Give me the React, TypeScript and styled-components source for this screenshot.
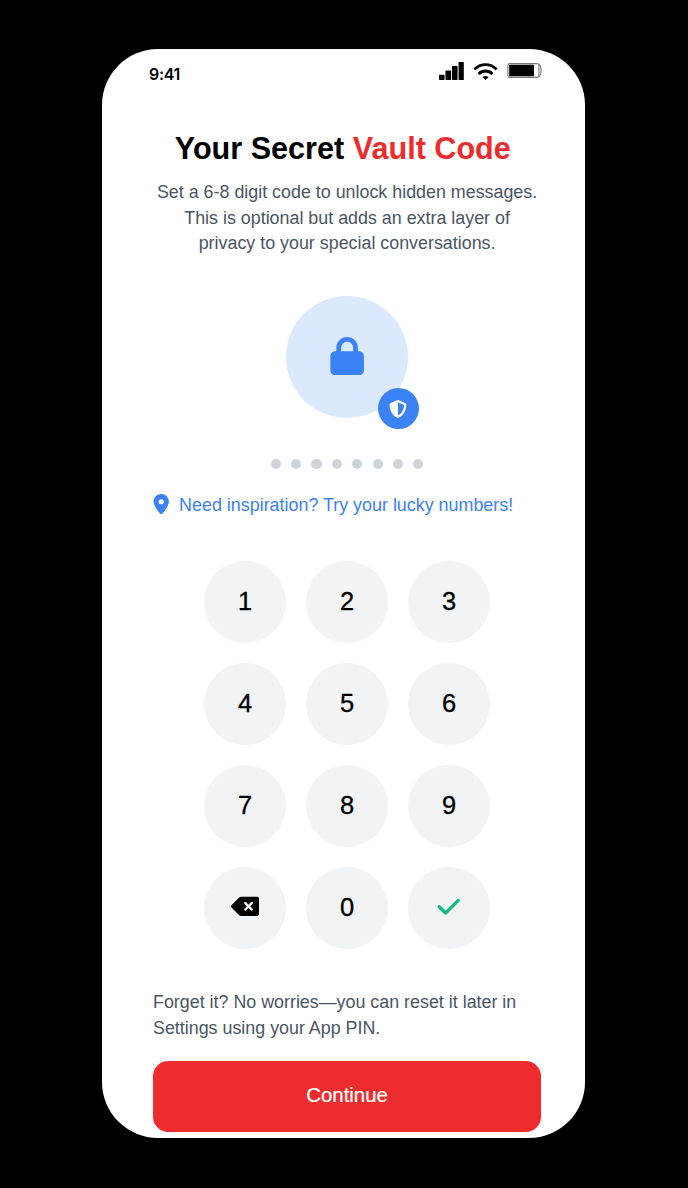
import React from "react";
import styled, { createGlobalStyle } from "styled-components";
import {
  FaLock,
  FaShieldHalved,
  FaLocationDot,
  FaDeleteLeft,
  FaCheck,
} from "react-icons/fa6";

const GlobalStyle = createGlobalStyle`
  * { box-sizing: border-box; }
  body {
    margin: 0;
    background: #000;
    font-family: "Liberation Sans", Arial, sans-serif;
  }
  svg { display: block; flex: none; }
  button { font-family: inherit; border: 0; padding: 0; cursor: pointer; }
`;

const Stage = styled.div`
  height: 1188px;
  padding: 49px 0 0 101.7px;
  background: #000;
`;

const Phone = styled.main`
  display: flex;
  flex-direction: column;
  width: 483.7px;
  height: 1089px;
  padding: 0 44.2px 0 51.3px;
  border-radius: 56px;
  background: #fff;
  overflow: hidden;
`;

const StatusBar = styled.header`
  display: flex;
  justify-content: space-between;
  height: 51px;
  padding-top: 13px;
  margin: 0 -0.8px 0 -4px;
`;

const Clock = styled.time`
  padding-top: 2px;
  font: 600 16px/20px Inter, sans-serif;
  letter-spacing: -0.3px;
`;

const Indicators = styled.div`
  display: flex;
  gap: 9px;
`;

const Title = styled.h1`
  margin: 28px 0 0;
  padding-right: 8.6px;
  font-size: 30.6px;
  line-height: 41px;
  font-weight: 700;
  text-align: center;
  white-space: nowrap;
`;

const Accent = styled.span`
  color: #ee2c2e;
`;

const Copy = styled.p<{ $centered?: boolean }>`
  margin: 0;
  font-size: 17.86px;
  line-height: 25.6px;
  color: #4b5563;
  text-align: ${(p) => (p.$centered ? "center" : "left")};
  white-space: nowrap;
`;

const Intro = styled.section`
  margin-top: 11px;
`;

const Emblem = styled.div`
  position: relative;
  display: flex;
  align-items: center;
  justify-content: center;
  align-self: center;
  flex: none;
  width: 122.5px;
  height: 122.5px;
  margin-top: 39px;
  padding-bottom: 2px;
  border-radius: 50%;
  background: #dbe9fe;
  color: #3b82f6;
`;

const Badge = styled.span`
  position: absolute;
  right: -10.6px;
  bottom: -10.8px;
  display: flex;
  align-items: center;
  justify-content: center;
  width: 41px;
  height: 41px;
  border-radius: 50%;
  background: #3b82f6;
  color: #fff;
`;

const Dots = styled.div`
  display: flex;
  justify-content: center;
  gap: 10.2px;
  margin-top: 40.5px;
`;

const Dot = styled.i`
  width: 10.2px;
  height: 10.2px;
  border-radius: 50%;
  background: #d1d3dc;
`;

const Hint = styled.a`
  display: flex;
  align-items: center;
  gap: 8px;
  height: 26px;
  margin: 23.5px 0 0 -2.4px;
  font-size: 17.9px;
  color: #3b82f6;
  white-space: nowrap;

  svg { margin-top: -3px; }
`;

const Keypad = styled.div`
  display: grid;
  grid-template-columns: repeat(3, 82px);
  gap: 20px;
  justify-content: center;
  margin-top: 42.3px;
`;

const Key = styled.button<{ $color?: string }>`
  display: flex;
  align-items: center;
  justify-content: center;
  height: 82px;
  padding-bottom: 2px;
  border-radius: 50%;
  background: #f2f3f5;
  color: ${(p) => p.$color ?? "#000"};
  font-size: 25.5px;
  line-height: 36px;
  -webkit-text-stroke: 0.3px currentColor;
`;

const Note = styled.section`
  margin-top: 41.6px;
`;

const Continue = styled.button`
  flex: none;
  height: 71.5px;
  margin-top: 19px;
  padding-bottom: 1px;
  border-radius: 15.3px;
  background: #ee2c2e;
  color: #fff;
  font-size: 20.4px;
  -webkit-text-stroke: 0.2px currentColor;
`;

const Signal = () => (
  <svg width="25" height="18" viewBox="0 0 25 18">
    <rect x="0" y="12.8" width="5.6" height="5.2" rx="0.8" />
    <rect x="6.5" y="8.5" width="5.6" height="9.5" rx="0.8" />
    <rect x="13" y="4" width="5.6" height="14" rx="0.8" />
    <rect x="19.6" y="0" width="5.2" height="18" rx="0.6" />
  </svg>
);

const Wifi = () => (
  <svg width="25" height="18" viewBox="0 0 25 18" fill="none" stroke="#000" strokeWidth="2.8">
    <path d="M1.4 7.4C7.6 0.9 17.4 0.9 23.6 7.4" />
    <path d="M5.6 11.9C9.5 8 15.5 8 19.4 11.9" />
    <path d="M9.4 15.2C11.1 13.6 13.9 13.6 15.6 15.2L12.5 18Z" fill="#000" stroke="none" />
  </svg>
);

const Battery = () => (
  <svg width="35" height="18" viewBox="0 0 35 18" fill="none">
    <rect x="0.9" y="1.6" width="31" height="13.8" rx="1.8" stroke="#777" strokeWidth="1.1" />
    <path d="M32.4 2.2Q34.2 5 34.2 8.5T32.4 14.8" stroke="#777" strokeWidth="1.1" />
    <rect x="2.2" y="2.7" width="24.8" height="11.6" rx="0.6" fill="#000" />
  </svg>
);

const DIGITS = ["1", "2", "3", "4", "5", "6", "7", "8", "9"];

export default function App() {
  return (
    <Stage>
      <GlobalStyle />
      <Phone>
        <StatusBar>
          <Clock>9:41</Clock>
          <Indicators>
            <Signal />
            <Wifi />
            <Battery />
          </Indicators>
        </StatusBar>
        <Title>
          Your Secret <Accent>Vault Code</Accent>
        </Title>
        <Intro>
          <Copy $centered>Set a 6-8 digit code to unlock hidden messages.</Copy>
          <Copy $centered>This is optional but adds an extra layer of</Copy>
          <Copy $centered>privacy to your special conversations.</Copy>
        </Intro>
        <Emblem>
          <FaLock size={38.3} />
          <Badge>
            <FaShieldHalved size={17.9} />
          </Badge>
        </Emblem>
        <Dots>
          {Array.from({ length: 8 }, (_, i) => (
            <Dot key={i} />
          ))}
        </Dots>
        <Hint>
          <FaLocationDot size={20.5} />
          Need inspiration? Try your lucky numbers!
        </Hint>
        <Keypad>
          {DIGITS.map((d) => (
            <Key key={d}>{d}</Key>
          ))}
          <Key aria-label="Delete">
            <FaDeleteLeft size={28.7} />
          </Key>
          <Key>0</Key>
          <Key aria-label="Confirm" $color="#10b981">
            <FaCheck size={25.5} />
          </Key>
        </Keypad>
        <Note>
          <Copy>Forget it? No worries—you can reset it later in</Copy>
          <Copy>Settings using your App PIN.</Copy>
        </Note>
        <Continue>Continue</Continue>
      </Phone>
    </Stage>
  );
}
